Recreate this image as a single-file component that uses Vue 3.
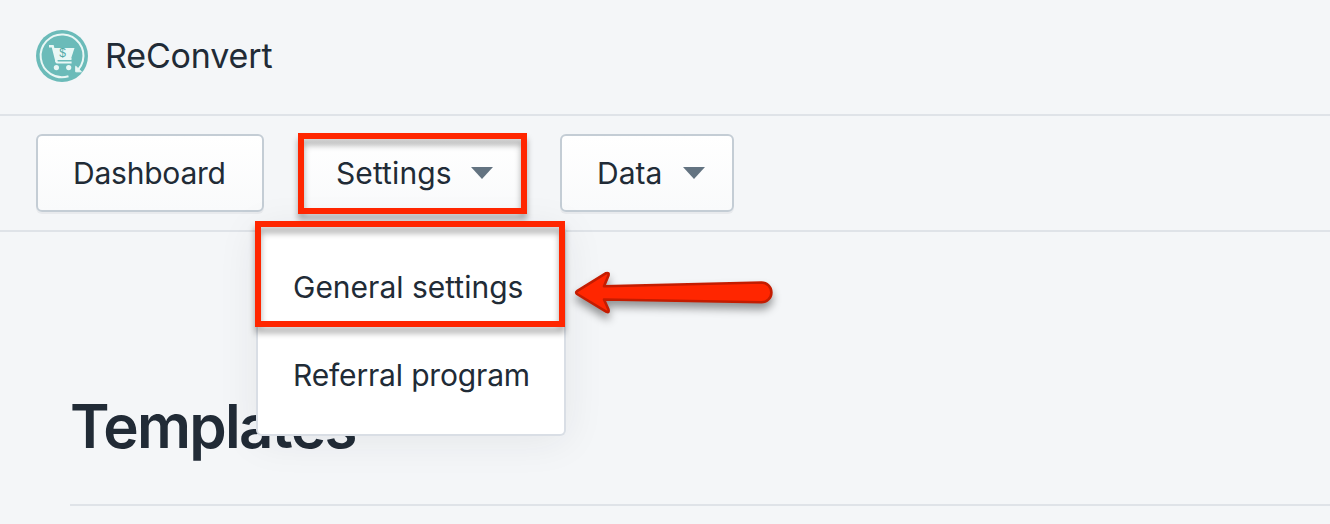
<script setup>
const items = [
  { label: 'General settings', cls: 'general' },
  { label: 'Referral program', cls: 'referral' },
]
</script>

<template>
  <div class="page">
    <header class="brand">
      <svg class="logo" viewBox="0 0 52 52" aria-hidden="true">
        <circle cx="26" cy="26" r="26" fill="#6bbbb9" />
        <g fill="none" stroke="#e9f7f5" stroke-width="2">
          <path d="M32.5 46.2A21.4 21.4 0 1 1 46.8 31Q45.500 36 42.300 39.500" />
          <path d="M13 16.200h3.700l4 15.800" stroke-width="2.400" />
          <path d="M35.500 29l-14.500 0q-2 1.800 0 3.600h14.600" />
        </g>
        <path d="M17.300 18h21.200l-3.600 11H20z" fill="#e9f7f5" />
        <path d="M39.700 36.200v5.600h5.800z" fill="#e9f7f5" stroke="#e9f7f5" stroke-linejoin="round" />
        <circle cx="20.400" cy="37.600" r="2.600" fill="#e9f7f5" />
        <circle cx="32.700" cy="37.600" r="2.600" fill="#e9f7f5" />
        <text x="26.700" y="27" class="dollar">$</text>
      </svg>
      <span class="name">ReConvert</span>
    </header>

    <nav class="bar">
      <button class="btn dashboard"><span>Dashboard</span></button>
      <div class="menu">
        <button class="btn settings">
          <span>Settings</span>
          <svg class="caret" viewBox="0 0 22 12"><path d="M0 0h22L11 12z" /></svg>
        </button>
        <div class="frame frame-button"></div>
        <ul class="dropdown">
          <li v-for="item in items" :key="item.label"><span :class="item.cls">{{ item.label }}</span></li>
        </ul>
        <div class="frame frame-item"></div>
        <svg class="arrow" viewBox="0 0 220 64">
          <path
            d="M12 31.200Q10.300 32.500 12 34L41.500 51.800Q44.500 53 43.500 49.500L39 39.500L196.500 42.300A9.800 9.800 0 0 0 196.500 22.500L39 26.300L43.500 15.500Q44.500 12.300 41 13.200Z"
          />
        </svg>
      </div>
      <button class="btn data">
        <span>Data</span>
        <svg class="caret" viewBox="0 0 22 12"><path d="M0 0h22L11 12z" /></svg>
      </button>
    </nav>

    <main class="content">
      <h1><span>Templates</span></h1>
    </main>
  </div>
</template>

<style>
body {
  margin: 0;
  overflow: hidden;
  background: #f4f6f8;
}
</style>

<style scoped>
.page {
  box-sizing: border-box;
  height: 524px;
  overflow: hidden;
  background: #f4f6f8;
  color: #212b36;
  font-family: Inter, "Liberation Sans", sans-serif;
}
.brand {
  box-sizing: border-box;
  display: flex;
  align-items: center;
  height: 116px;
  padding: 0 36px 2px;
  border-bottom: 2px solid #dfe3e8;
}
.logo {
  width: 52px;
  height: 52px;
}
.dollar {
  font: 400 12px "Liberation Sans", sans-serif;
  text-anchor: middle;
  fill: #4fa9a6;
}
.name {
  margin-left: 17px;
  font-size: 34px;
  letter-spacing: -0.15px;
  line-height: 40px;
}
.bar {
  box-sizing: border-box;
  display: flex;
  align-items: flex-start;
  height: 116px;
  padding: 18px 36px;
  border-bottom: 2px solid #dfe3e8;
}
.btn {
  box-sizing: border-box;
  display: flex;
  align-items: center;
  height: 78px;
  padding: 0 0 0 35px;
  border: 2px solid #c4cdd5;
  border-radius: 6px;
  background: linear-gradient(#fff, #f9fafb);
  box-shadow: 0 2px 0 rgba(22, 29, 37, 0.05);
  color: #212b36;
  font: 400 30px/40px Inter, "Liberation Sans", sans-serif;
  white-space: nowrap;
}
.dashboard {
  width: 228px;
  letter-spacing: -0.22px;
}
.menu {
  position: relative;
  width: 226px;
  margin: 0 35px;
}
.settings {
  width: 226px;
  letter-spacing: 0.1px;
}
.data {
  width: 174px;
}
.caret {
  width: 22px;
  height: 12px;
  margin-left: auto;
  margin-right: 27px;
  fill: #637381;
}
.settings .caret {
  margin-right: 30px;
}
.frame {
  position: absolute;
  z-index: 3;
  box-sizing: border-box;
  border: 6px solid #ff2600;
  filter: drop-shadow(0 6px 3px rgba(0, 0, 0, 0.32));
}
.frame-button {
  left: -1px;
  top: -1px;
  width: 229px;
  height: 81px;
}
.frame-item {
  left: -44px;
  top: 87px;
  width: 310px;
  height: 106px;
}
.dropdown {
  position: absolute;
  z-index: 2;
  left: -43px;
  top: 92px;
  box-sizing: border-box;
  width: 310px;
  height: 210px;
  margin: 0;
  padding: 17px 0 0 35px;
  border: 2px solid #d9dee5;
  border-top: 0;
  border-radius: 6px;
  background: #fff;
  box-shadow: 0 4px 40px rgba(33, 43, 54, 0.08);
  list-style: none;
}
.dropdown li {
  height: 88px;
  font-size: 30px;
  line-height: 88px;
  white-space: nowrap;
}
.referral {
  letter-spacing: -0.17px;
}
.arrow {
  position: absolute;
  z-index: 3;
  left: 266px;
  top: 126px;
  width: 220px;
  height: 64px;
  overflow: visible;
  fill: #ff2600;
  stroke: #c41c00;
  stroke-width: 2.600;
  stroke-linejoin: round;
  filter: drop-shadow(0 6px 4px rgba(0, 0, 0, 0.4));
}
.content {
  box-sizing: border-box;
  height: 274px;
  margin-left: 70px;
  padding-top: 154px;
  border-bottom: 2px solid #dfe3e8;
}
h1 {
  margin: 0;
  font-size: 60px;
  font-weight: 600;
  letter-spacing: -1.7px;
  line-height: 80px;
}
</style>
